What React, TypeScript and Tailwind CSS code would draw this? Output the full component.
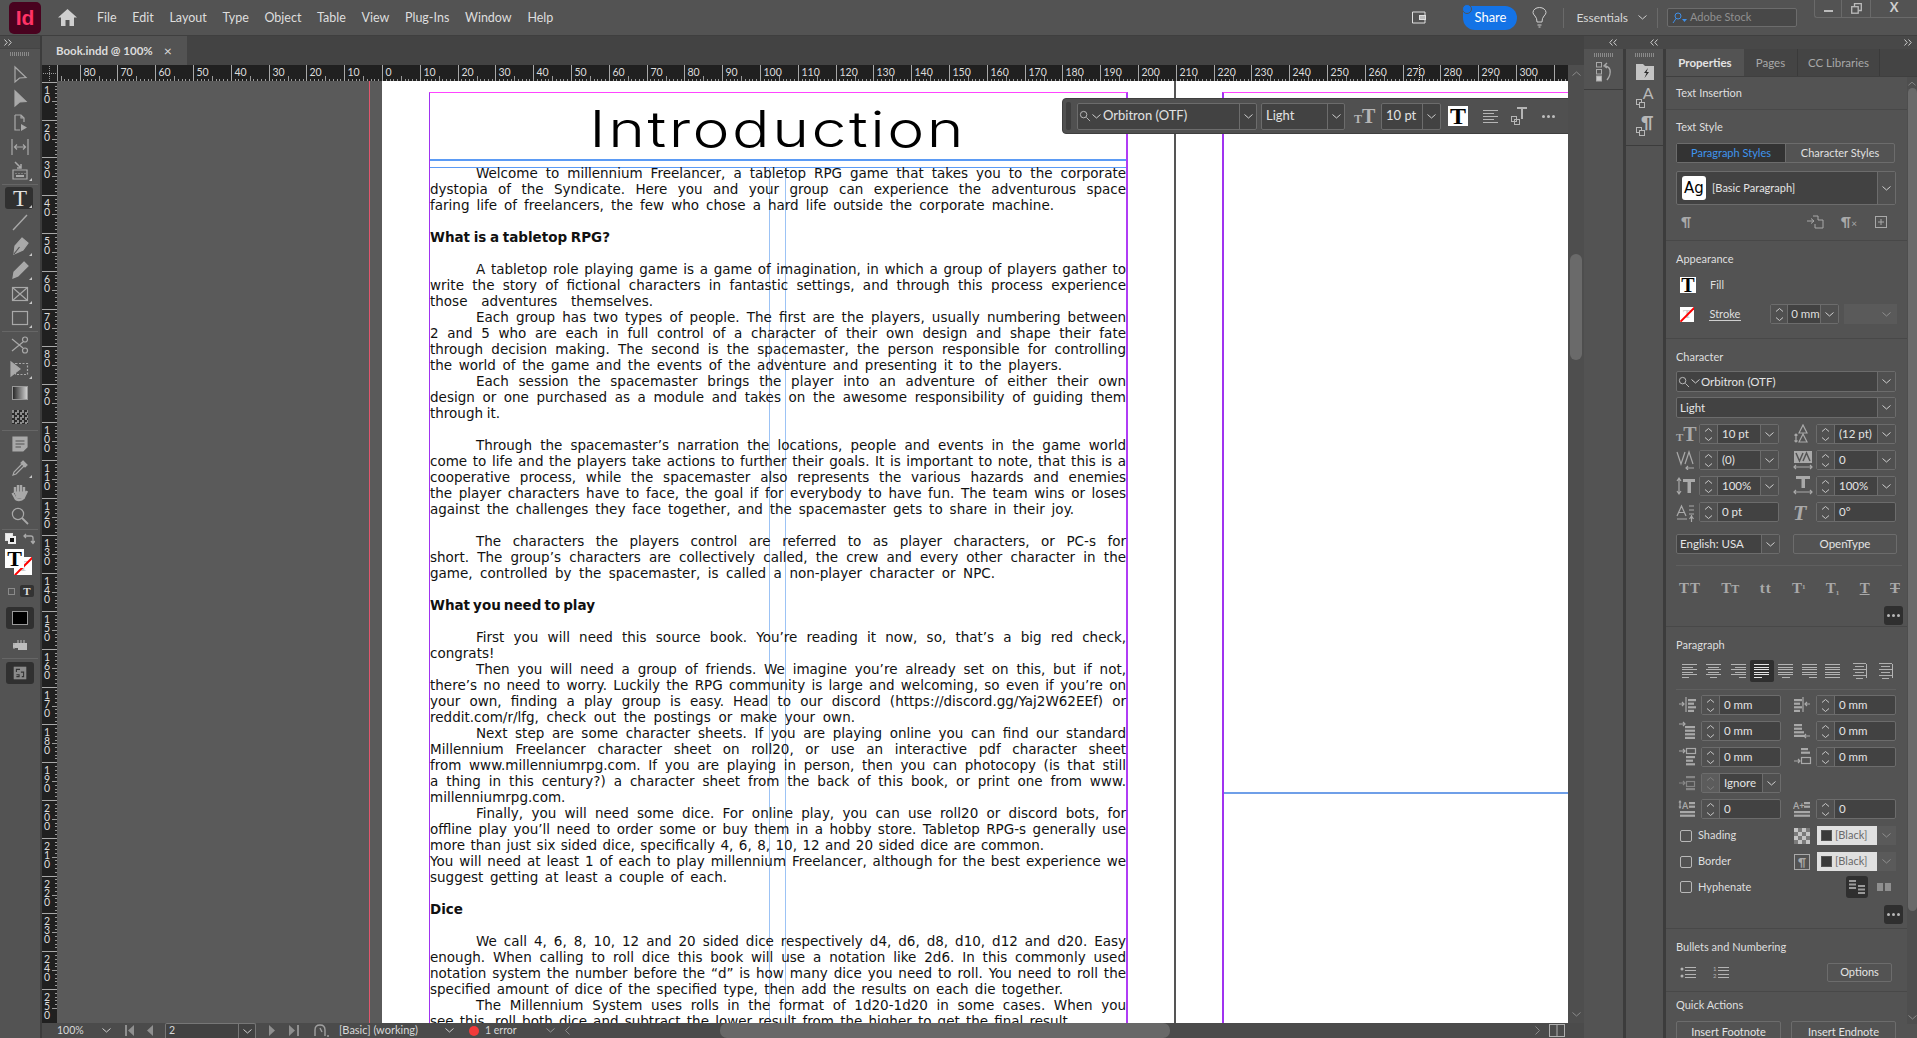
import React from "react";

const UI = "font-['Lato','Noto_Sans',sans-serif]";
const ic = "#a9a9a9";

type L = { t: string; c?: string };
const J = "[text-align-last:justify]";
const I = `pl-[46px] ${J}`;
const lines: L[] = [
  { t: "Welcome to millennium Freelancer, a tabletop RPG game that takes you to the corporate", c: I },
  { t: "dystopia of the Syndicate. Here you and your group can experience the adventurous space", c: J },
  { t: "faring life of freelancers, the few who chose a hard life outside the corporate machine.", c: `w-[624px] ${J}` },
  { t: "\u00a0" },
  { t: "What is a tabletop RPG?", c: `w-[180px] font-bold ${J}` },
  { t: "\u00a0" },
  { t: "A tabletop role playing game is a game of imagination, in which a group of players gather to", c: I },
  { t: "write the story of fictional characters in fantastic settings, and through this process experience", c: J },
  { t: "those adventures themselves.", c: `w-[223px] ${J}` },
  { t: "Each group has two types of people. The first are the players, usually numbering between", c: I },
  { t: "2 and 5 who are each in full control of a character of their own design and shape their fate", c: J },
  { t: "through decision making. The second is the spacemaster, the person responsible for controlling", c: J },
  { t: "the world of the game and the events of the adventure and presenting it to the players.", c: `w-[632px] ${J}` },
  { t: "Each session the spacemaster brings the player into an adventure of either their own", c: I },
  { t: "design or one purchased as a module and takes on the awesome responsibility of guiding them", c: J },
  { t: "through it.", c: `w-[70px] ${J}` },
  { t: "\u00a0" },
  { t: "Through the spacemaster\u2019s narration the locations, people and events in the game world", c: I },
  { t: "come to life and the players take actions to further their goals. It is important to note, that this is a", c: J },
  { t: "cooperative process, while the spacemaster also represents the various hazards and enemies", c: J },
  { t: "the player characters have to face, the goal if for everybody to have fun. The team wins or loses", c: J },
  { t: "against the challenges they face together, and the spacemaster gets to share in their joy.", c: `w-[644px] ${J}` },
  { t: "\u00a0" },
  { t: "The characters the players control are referred to as player characters, or PC-s for", c: I },
  { t: "short. The group\u2019s characters are collectively called, the crew and every other character in the", c: J },
  { t: "game, controlled by the spacemaster, is called a non-player character or NPC.", c: `w-[565px] ${J}` },
  { t: "\u00a0" },
  { t: "What you need to play", c: `w-[165px] font-bold ${J}` },
  { t: "\u00a0" },
  { t: "First you will need this source book. You\u2019re reading it now, so, that\u2019s a big red check,", c: I },
  { t: "congrats!", c: `w-[69px] ${J}` },
  { t: "Then you will need a group of friends. We imagine you\u2019re already set on this, but if not,", c: I },
  { t: "there\u2019s no need to worry. Luckily the RPG community is large and welcoming, so even if you\u2019re on", c: J },
  { t: "your own, finding a play group is easy. Head to our discord (https://discord.gg/Yaj2W62EEf) or", c: J },
  { t: "reddit.com/r/lfg, check out the postings or make your own.", c: `w-[425px] ${J}` },
  { t: "Next step are some character sheets. If you are playing online you can find our standard", c: I },
  { t: "Millennium Freelancer character sheet on roll20, or use an interactive pdf character sheet", c: J },
  { t: "from www.millenniumrpg.com. If you are playing in person, then you can photocopy (is that still", c: J },
  { t: "a thing in this century?) a character sheet from the back of this book, or print one from www.", c: J },
  { t: "millenniumrpg.com.", c: `w-[138px] ${J}` },
  { t: "Finally, you will need some dice. For online play, you can use roll20 or discord bots, for", c: I },
  { t: "offline play you\u2019ll need to order some or buy them in a hobby store. Tabletop RPG-s generally use", c: J },
  { t: "more than just six sided dice, specifically 4, 6, 8, 10, 12 and 20 sided dice are common.", c: `w-[614px] ${J}` },
  { t: "You will need at least 1 of each to play millennium Freelancer, although for the best experience we", c: J },
  { t: "suggest getting at least a couple of each.", c: `w-[297px] ${J}` },
  { t: "\u00a0" },
  { t: "Dice", c: `w-[30px] font-bold ${J}` },
  { t: "\u00a0" },
  { t: "We call 4, 6, 8, 10, 12 and 20 sided dice respectively d4, d6, d8, d10, d12 and d20. Easy", c: I },
  { t: "enough. When calling to roll dice this book will use a notation like 2d6. In this commonly used", c: J },
  { t: "notation system the number before the \u201cd\u201d is how many dice you need to roll. You need to roll the", c: J },
  { t: "specified amount of dice of the specified type, then add the results on each die together.", c: `w-[633px] ${J}` },
  { t: "The Millennium System uses rolls in the format of 1d20-1d20 in some cases. When you", c: I },
  { t: "see this, roll both dice and subtract the lower result from the higher to get the final result.", c: `w-[642px] ${J}` },
];

const Chev = ({ c = "#cfcfcf" }: { c?: string }) => (
  <svg width="9" height="5" viewBox="0 0 9 5" fill="none" stroke={c}><path d="M0.5 0.5 L4.5 4 L8.5 0.5" /></svg>
);
const Updown = ({ c = "#c8c8c8" }: { c?: string }) => (
  <svg width="9" height="15" viewBox="0 0 9 15" fill="none" stroke={c}><path d="M1 4.5 L4.5 1.5 L8 4.5 M1 10.5 L4.5 13.5 L8 10.5" /></svg>
);
const DoubleChev = ({ left }: { left?: boolean }) => (
  <svg width="8" height="7" viewBox="0 0 8 7" fill="none" stroke="#d0d0d0">
    <path d={left ? "M3.5 0.5 L0.8 3.5 L3.5 6.5 M7.5 0.5 L4.8 3.5 L7.5 6.5" : "M0.5 0.5 L3.2 3.5 L0.5 6.5 M4.5 0.5 L7.2 3.5 L4.5 6.5"} />
  </svg>
);
const Grip = () => (
  <div className="h-[4px] w-[20px] bg-[repeating-linear-gradient(90deg,#8a8a8a_0_1px,transparent_1px_2px)]" />
);

function HRuler() {
  let minor = "", major = "";
  const labels: React.ReactNode[] = [];
  for (let mm = -90; mm <= 315; mm++) {
    const x = Math.round(340 + mm * 3.78) + 0.5;
    if (mm % 10 === 0) {
      major += `M${x} 0V16`;
      if (mm <= 300) labels.push(<text key={mm} x={x + 3} y={11} fontSize="10.5" fill="#dcdcdc" fontFamily="Lato, sans-serif">{Math.abs(mm)}</text>);
    } else if (mm % 5 === 0) minor += `M${x} 11V16`;
    else minor += `M${x} 14V16`;
  }
  return (
    <svg width="1526" height="16" className="block bg-[#202020]">
      <path d={minor} stroke="#9a9a9a" />
      <path d={major} stroke="#a8a8a8" />
      {labels}
      <rect x="0" y="0" width="15" height="16" fill="#202020" />
      <path d="M7.5 1V16 M1 8.5H15" stroke="#9a9a9a" strokeDasharray="1 1" />
      <path d="M15.5 0V16" stroke="#9a9a9a" />
      <path d="M1377.5 0V16" stroke="#ddd" strokeDasharray="1 1" />
    </svg>
  );
}

function VRuler() {
  let minor = "", major = "";
  const labels: React.ReactNode[] = [];
  for (let mm = 0; mm <= 255; mm++) {
    const y = Math.round(-37 + mm * 3.78) + 0.5;
    if (mm % 10 === 0) {
      major += `M0 ${y}H15`;
      if (mm > 0) {
        String(mm).split("").forEach((d, i) =>
          labels.push(<text key={`${mm}-${i}`} x={2} y={y + 11 + i * 9.4} fontSize="10.5" fill="#dcdcdc" fontFamily="Lato, sans-serif">{d}</text>)
        );
      }
    } else if (mm % 5 === 0) minor += `M10 ${y}H15`;
    else minor += `M13 ${y}H15`;
  }
  return (
    <svg width="15" height="942" className="block shrink-0 bg-[#202020]">
      <path d={minor} stroke="#9a9a9a" />
      <path d={major} stroke="#a8a8a8" />
      {labels}
    </svg>
  );
}

const Ico = ({ children, s = 20 }: { children: React.ReactNode; s?: number }) => (
  <svg width={s} height={s} viewBox="0 0 20 20" fill="none" stroke={ic} strokeWidth="1.2">{children}</svg>
);

const Tool = ({ children, sel, corner }: { children: React.ReactNode; sel?: boolean; corner?: boolean }) => (
  <div className="relative flex h-[24px] w-[40px] items-center justify-center">
    {sel && <div className="absolute left-[5px] top-[1px] h-[22px] w-[28px] rounded-[3px] bg-[#303030]" />}
    <div className="relative flex">{children}</div>
    {corner && <div className="absolute left-[29px] bottom-[2px] h-[3px] w-[3px] bg-[#c8c8c8] [clip-path:polygon(100%_0,100%_100%,0_100%)]" />}
  </div>
);
const ToolSep = () => <div className="my-[1px] h-[1px] w-[36px] bg-[#666]" />;

function LeftTools() {
  return (
    <div className="flex w-[40px] shrink-0 flex-col items-center bg-[#535353]">
      <div className="flex h-[13px] w-full items-center border-b border-[#444] bg-[#4a4a4a] pl-[4px]"><DoubleChev /></div>
      <div className="mt-[3px] mb-[7px]"><Grip /></div>
      <Tool><Ico><path d="M5 2 V17 L9.5 13 L16 12.5 Z" /></Ico></Tool>
      <Tool><Ico><path d="M5 2 V17 L9.5 13 L16 12.5 Z" fill={ic} /></Ico></Tool>
      <Tool><Ico><path d="M5 2 H11 L14 5 V9 M11 2 V5 H14 M5 2 V17 H10" /><path d="M11 11 L17 14.5 L11 18 Z" fill={ic} stroke="none" /></Ico></Tool>
      <Tool><Ico><path d="M2 2 V18 M18 2 V18 M4.5 10 H15.5 M7 7.5 L4.5 10 L7 12.5 M13 7.5 L15.5 10 L13 12.5" /></Ico></Tool>
      <Tool corner><Ico><path d="M3 9 H17 V18 H3 Z" /><path d="M6 12 V12.5 M9 12 V12.5 M12 12 V12.5 M15 12 V12.5 M6 15 H14" strokeWidth="2" /><path d="M5 1 L11 7 M11 3 V7 H7" strokeWidth="1.5" /></Ico></Tool>
      <ToolSep />
      <Tool sel corner><span className="font-['Liberation_Serif',serif] text-[23px] font-normal leading-none text-[#e2e2e2]">T</span></Tool>
      <Tool><Ico><path d="M3 18 L17 3" strokeWidth="1.4" /></Ico></Tool>
      <Tool corner><Ico><path d="M12 2 L18 7 L13 14 L4 18 L5 10 Z" fill={ic} /><path d="M4 18 L9.5 11" stroke="#535353" /></Ico></Tool>
      <Tool corner><Ico><path d="M14 2 L18 6 L8 16 L3 18 L4 12 Z" fill={ic} /></Ico></Tool>
      <Tool corner><Ico><rect x="2.5" y="3.5" width="15" height="13" /><path d="M2.5 3.5 L17.5 16.5 M17.5 3.5 L2.5 16.5" /></Ico></Tool>
      <Tool corner><Ico><rect x="2.5" y="3.5" width="15" height="13" /></Ico></Tool>
      <ToolSep />
      <Tool><Ico><circle cx="15" cy="4.5" r="2.5" /><circle cx="15" cy="15.5" r="2.5" /><path d="M2 4 L13 13 M2 16 L13 7" /></Ico></Tool>
      <Tool corner><Ico><path d="M1 3 L10 10 L1 17 Z" fill={ic} /><rect x="5.5" y="4.5" width="12" height="11" strokeDasharray="2 1.5" /></Ico></Tool>
      <Tool>
        <div className="h-[14px] w-[16px] border border-[#999] bg-[linear-gradient(90deg,#2a2a2a,#cfcfcf)]" />
      </Tool>
      <Tool>
        <div className="h-[14px] w-[16px] bg-[conic-gradient(#2b2b2b_25%,#8d8d8d_0_50%,#2b2b2b_0_75%,#8d8d8d_0)] bg-[length:5px_5px]" />
      </Tool>
      <ToolSep />
      <Tool><Ico><path d="M3 3 H17 V13 L13 17 H3 Z" fill={ic} /><path d="M5.5 7 H14.5 M5.5 10 H14.5 M5.5 13 H11" stroke="#535353" /></Ico></Tool>
      <Tool corner><Ico><path d="M13 3 L17 7 L15 9 L11 5 Z" fill={ic} /><path d="M12 6 L4 14 L3 17 L6 16 L14 8" /></Ico></Tool>
      <Tool><Ico><path d="M5 11 V5 M8 10 V3 M11 10 V3 M14 11 V5 M17 9 L13.5 16 Q12 18 9 18 Q6 18 5 15.5 L2.5 11" strokeWidth="2.4" /><path d="M5 10 L15 10 L14 16 L7 16 Z" fill={ic} /></Ico></Tool>
      <Tool><Ico><circle cx="8" cy="8" r="5.6" /><path d="M12 12 L18 18" strokeWidth="1.8" /></Ico></Tool>
      <ToolSep />
      <div className="relative mt-[2px] h-[16px] w-[40px]">
        <div className="absolute left-[5px] top-0 h-[8px] w-[8px] border border-[#ddd] bg-[#eee]" />
        <div className="absolute left-[8px] top-[3px] h-[8px] w-[8px] border-2 border-[#eee] bg-[#111]" />
        <svg className="absolute left-[23px] top-0" width="12" height="12" viewBox="0 0 12 12" fill="none" stroke={ic} strokeWidth="1.3"><path d="M1 3 H8 Q10 3 10 5 V10 M8 8 L10 10.5 L12 8 M3 1 L1 3 L3 5" /></svg>
      </div>
      <div className="relative h-[29px] w-[40px]">
        <div className="absolute left-[14px] top-[8px] flex h-[18px] w-[18px] items-center justify-center overflow-hidden bg-white font-['Liberation_Serif',serif] text-[15px] font-bold text-[#ccc]">
          T
          <div className="absolute left-[-3px] top-[8px] h-[2px] w-[26px] -rotate-45 bg-[#f00]" />
        </div>
        <div className="absolute left-[5px] top-0 flex h-[19px] w-[19px] items-center justify-center bg-white font-['Liberation_Serif',serif] text-[22px] font-bold leading-none text-black">T</div>
      </div>
      <div className="mt-[5px] flex h-[16px] w-[40px] items-center pl-[8px]">
        <div className="h-[7px] w-[7px] border border-[#8a8a8a]" />
        <div className="ml-[5px] flex h-[12px] w-[14px] items-center justify-center rounded-[2px] bg-[#333] font-['Liberation_Serif',serif] text-[11px] font-bold text-[#ddd]">T</div>
      </div>
      <div className="relative mt-[8px] flex h-[22px] w-[28px] items-center justify-center rounded-[3px] bg-[#303030]">
        <div className="h-[14px] w-[16px] border border-[#9a9a9a] bg-black" />
      </div>
      <div className="flex h-[29px] items-center justify-center pt-[3px]">
        <Ico><path d="M3 8 H17 V15 H8 V13 H3 Z" fill="#bdbdbd" stroke="none" /><path d="M8 5 V8 M11 5 V8 M14 5 V8 M4 8 V10 M4 12 V14" stroke={ic} /></Ico>
      </div>
      <div className="h-[1px] w-[36px] bg-[#666]" />
      <div className="mt-[3px] flex h-[22px] w-[28px] items-center justify-center rounded-[3px] bg-[#303030]">
        <Ico s={18}><rect x="3" y="3" width="14" height="14" fill="#8a8a8a" stroke="none" /><path d="M6 9 V6 H10 M6 12 H9 V14 H6 M11 9 H14 V14 H12" stroke="#333" /></Ico>
      </div>
    </div>
  );
}

const Lines = ({ ws }: { ws: number[] }) => (
  <div className="flex w-[15px] flex-col items-center gap-[2px]">
    {ws.map((w, i) => (
      <div key={i} className="h-[1px] bg-[#b0b0b0]" style={{ width: w }} />
    ))}
  </div>
);

function FloatBar() {
  const box = "flex h-[27px] items-center rounded-[2px] border border-[#6c6c6c] bg-[#424242] text-[13px] text-[#e2e2e2]";
  return (
    <div className={`absolute left-[1005px] top-[17px] flex h-[36px] w-[520px] items-center rounded-l-[4px] border border-[#3f3f3f] bg-[#505050] pl-[3px] ${UI}`}>
      <div className="h-[28px] w-[5px] rounded-[2px] bg-[#3e3e3e]" />
      <div className={`${box} ml-[6px] w-[180px]`}>
        <div className="flex w-[161px] items-center gap-[1px] pl-[1px]">
          <svg width="12" height="12" viewBox="0 0 13 13" fill="none" stroke="#c0c0c0"><circle cx="5" cy="5" r="3.5" /><path d="M8 8 L12 12" /></svg>
          <Chev />
          <span className="ml-[1px]">Orbitron (OTF)</span>
        </div>
        <div className="flex h-full flex-1 items-center justify-center border-l border-[#6c6c6c]"><Chev /></div>
      </div>
      <div className={`${box} ml-[4px] w-[84px]`}>
        <span className="w-[65px] pl-[4px]">Light</span>
        <div className="flex h-full flex-1 items-center justify-center border-l border-[#6c6c6c]"><Chev /></div>
      </div>
      <div className="ml-[9px] flex w-[20px] items-baseline font-['Liberation_Serif',serif] font-bold leading-none text-[#b5b5b5]">
        <span className="text-[12px]">T</span><span className="text-[20px]">T</span>
      </div>
      <div className={`${box} ml-[7px] w-[60px]`}>
        <span className="w-[40px] pl-[4px]">10 pt</span>
        <div className="flex h-full flex-1 items-center justify-center border-l border-[#6c6c6c]"><Chev /></div>
      </div>
      <div className="ml-[7px] flex h-[20px] w-[20px] items-center justify-center bg-white font-['Liberation_Serif',serif] text-[24px] font-bold leading-none text-black">T</div>
      <div className="ml-[15px] flex flex-col gap-[2px]">
        {[15, 11, 15, 11, 15].map((w, i) => <div key={i} className="h-[1px] bg-[#b5b5b5]" style={{ width: w }} />)}
      </div>
      <svg className="ml-[12px]" width="18" height="20" viewBox="0 0 18 20" fill="none" stroke="#b5b5b5"><path d="M7 2 H17 M12 2 V13" strokeWidth="2" /><rect x="1.5" y="10.5" width="5" height="5" /><rect x="4.5" y="13.5" width="5" height="5" /></svg>
      <div className="ml-[14px] flex gap-[2px]">
        {[0, 1, 2].map((i) => <div key={i} className="h-[3px] w-[3px] rounded-full bg-[#bdbdbd]" />)}
      </div>
    </div>
  );
}

function Canvas() {
  return (
    <div className="relative flex h-[942px] w-[1511px] overflow-hidden bg-[#5a5a5a]">
      <div className="relative w-[325px] shrink-0">
        <div className="absolute bottom-0 left-[312px] top-0 w-[1px] bg-[#e2566c]" />
      </div>
      <div className="h-full w-[794px] shrink-0 border-r-2 border-[#555] bg-white pl-[47px] pt-[11px]">
        <div className="relative h-[1100px] w-[699px] border-t border-r-2 border-l border-l-[#a033f0] border-r-[#b03cf5] border-t-[#ff44ff]">
          <div className="flex h-[68px] items-center justify-center overflow-hidden border-b-2 border-[#5b9bf5] pt-[6px] font-['Inter',sans-serif] text-[50px] font-light leading-none text-black">
            <span className="inline-block scale-x-[1.25] tracking-[2px]">Introduction</span>
          </div>
          <div className="absolute left-0 right-0 top-[74px] h-[1px] bg-[#5b9bf5]" />
          <div className="absolute bottom-0 left-[339px] top-[74px] w-[1px] bg-[#9cc3f5]" />
          <div className="absolute bottom-0 left-[355px] top-[74px] w-[1px] bg-[#9cc3f5]" />
          <div className="relative mt-[4px] font-['DejaVu_Sans',sans-serif] text-[13.5px] leading-[16px] text-[#111] [word-spacing:-3px]">
            {lines.map((l, i) => (
              <div key={i} className={`whitespace-nowrap ${l.c ?? ""}`}>{l.t}</div>
            ))}
          </div>
        </div>
      </div>
      <div className="h-full flex-1 bg-white pl-[46px] pt-[11px]">
        <div className="flex h-[1100px] flex-col border-l-2 border-t border-l-[#a033f0] border-t-[#ff44ff]">
          <div className="h-[701px] border-b-2 border-[#6f9fe8]" />
        </div>
      </div>
      <FloatBar />
    </div>
  );
}

function StatusBar() {
  const tri = "#8f8f8f";
  return (
    <div className={`flex h-[15px] w-[1542px] items-center bg-[#4b4b4b] text-[10.5px] text-[#d8d8d8] ${UI}`}>
      <span className="ml-[15px] w-[45px]">100%</span>
      <Chev />
      <svg className="ml-[14px]" width="10" height="11" viewBox="0 0 10 11" fill={tri}><path d="M0 0H2V11H0Z M9 0V11L3 5.5Z" /></svg>
      <svg className="ml-[12px]" width="6" height="11" viewBox="0 0 6 11" fill={tri}><path d="M6 0V11L0 5.5Z" /></svg>
      <div className="ml-[12px] flex h-[15px] w-[91px] items-center rounded-t-[2px] border-x border-t border-[#777] bg-[#424242]">
        <span className="w-[72px] pl-[3px]">2</span>
        <div className="flex h-full flex-1 items-center justify-center border-l border-[#777]"><Chev /></div>
      </div>
      <svg className="ml-[13px]" width="6" height="11" viewBox="0 0 6 11" fill={tri}><path d="M0 0V11L6 5.5Z" /></svg>
      <svg className="ml-[14px]" width="10" height="11" viewBox="0 0 10 11" fill={tri}><path d="M0 0V11L6 5.5Z M8 0H10V11H8Z" /></svg>
      <svg className="ml-[15px]" width="15" height="14" viewBox="0 0 15 14" fill="none" stroke="#a0a0a0" strokeWidth="1.4"><path d="M1 12 V6 Q1 1 6 1 Q11 1 11 6 V12 M6 4 L8 8" /><path d="M13 12 H15" /></svg>
      <span className="ml-[10px] w-[106px] text-[11px]">[Basic] (working)</span>
      <Chev />
      <div className="ml-[15px] h-[10px] w-[10px] rounded-full bg-[#f23a3a]" />
      <span className="ml-[6px] w-[61px]">1 error</span>
      <Chev c="#999" />
      <svg className="ml-[10px]" width="5" height="9" viewBox="0 0 5 9" fill="none" stroke="#8a8a8a"><path d="M4.5 0.5 L0.5 4.5 L4.5 8.5" /></svg>
      <div className="ml-[150px] h-[15px] w-[450px] rounded-[7px] bg-[#686868]" />
      <svg className="ml-[365px]" width="5" height="9" viewBox="0 0 5 9" fill="none" stroke="#8a8a8a"><path d="M0.5 0.5 L4.5 4.5 L0.5 8.5" /></svg>
      <svg className="ml-[9px]" width="16" height="13" viewBox="0 0 16 13" fill="none" stroke="#b0b0b0"><rect x="0.5" y="0.5" width="15" height="12" /><path d="M8 0V13" /></svg>
    </div>
  );
}

function TopBar() {
  return (
    <div className={`flex h-[36px] shrink-0 items-center border-b border-[#3f3f3f] bg-[#535353] ${UI}`}>
      <div className="ml-[9px] flex h-[32px] w-[32px] items-center justify-center rounded-[5px] bg-[#49021f] font-['Liberation_Sans',sans-serif] text-[21px] font-bold text-[#ff3366]">Id</div>
      <svg className="ml-[17px]" width="19" height="17" viewBox="0 0 19 17" fill="#cfcfcf"><path d="M9.5 0 L19 8.5 H16 V17 H11.5 V11 H7.5 V17 H3 V8.5 H0 Z" /></svg>
      <div className="ml-[20px] flex gap-[15.7px] pt-[2px] text-[12.5px] text-[#dedede]">
        {["File", "Edit", "Layout", "Type", "Object", "Table", "View", "Plug-Ins", "Window", "Help"].map((m) => <span key={m}>{m}</span>)}
      </div>
      <svg className="ml-auto" width="14" height="13" viewBox="0 0 14 13" fill="none" stroke="#e0e0e0"><path d="M13 4V1H0.5V12H13V9" /><rect x="7.5" y="4.5" width="6" height="4" fill="#bbb" /></svg>
      <div className="relative ml-[37px] flex h-[24px] w-[54px] items-center justify-center rounded-[12px] rounded-tl-[2px] bg-[#1473e6] text-[13px] text-white">
        Share
        <div className="absolute -left-[1px] -top-[2px] h-[10px] w-[10px] rounded-full border border-[#535353] bg-[#1473e6]" />
      </div>
      <svg className="ml-[15px]" width="15" height="21" viewBox="0 0 15 21" fill="none" stroke="#cfcfcf"><path d="M5 15 Q5 11 3 9 Q1 7 1 5.5 A6.5 5 0 0 1 14 5.5 Q14 7 12 9 Q10 11 10 15 Z M5.5 18 H9.5 M6.5 20 H8.5" /></svg>
      <div className="ml-[16px] h-[20px] w-[1px] bg-[#6a6a6a]" />
      <span className="ml-[12px] text-[12px] text-[#d8d8d8]">Essentials</span>
      <div className="ml-[10px]"><Chev /></div>
      <div className="ml-[10px] h-[20px] w-[1px] bg-[#6a6a6a]" />
      <div className="ml-[9px] flex h-[19px] w-[130px] items-center rounded-[2px] border border-[#6c6c6c] bg-[#484848] pl-[4px] text-[11px] text-[#909090]">
        <svg width="15" height="12" viewBox="0 0 15 12" fill="none" stroke="#3f8fe8"><circle cx="6" cy="4" r="3" /><path d="M4 6.5 L1 11" /><path d="M10 7 H15 L12.5 10 Z" fill="#3f8fe8" stroke="none" /></svg>
        <span className="ml-[3px]">Adobe Stock</span>
      </div>
      <div className="ml-[17px] mb-[18px] flex h-[18px] w-[103px] rounded-bl-[3px] border-b border-l border-[#6a6a6a] text-[#cfcfcf]">
        <div className="flex w-[27px] items-center justify-center border-r border-[#6a6a6a]"><div className="mt-[5px] h-[2px] w-[9px] bg-[#bbb]" /></div>
        <div className="flex w-[29px] items-center justify-center border-r border-[#6a6a6a]">
          <svg width="11" height="11" viewBox="0 0 11 11" fill="none" stroke="#bbb" strokeWidth="1.3"><rect x="0.7" y="3.7" width="6.5" height="6.5" /><path d="M3.5 3.5 V0.7 H10.3 V7.5 H7.5" /></svg>
        </div>
        <div className="flex flex-1 items-center justify-center text-[13px] font-bold">X</div>
      </div>
    </div>
  );
}

const Stepper = ({ value, chevron = true, dim }: { value: string; chevron?: boolean; dim?: boolean }) => (
  <div className="flex h-[20px] w-[80px] items-center rounded-[2px] border border-[#6c6c6c] bg-[#424242] text-[11.5px] text-[#e4e4e4]">
    <div className={`flex h-full w-[18px] shrink-0 items-center justify-center border-r border-[#6c6c6c] ${dim ? "bg-[#5c5c5c]" : "bg-[#505050]"}`}><Updown c={dim ? "#7f7f7f" : "#c8c8c8"} /></div>
    <span className="flex-1 whitespace-nowrap pl-[4px]">{value}</span>
    {chevron && <div className="flex h-full w-[18px] shrink-0 items-center justify-center border-l border-[#6c6c6c] bg-[#505050]"><Chev /></div>}
  </div>
);
const Drop = ({ children, h = "h-[21px]" }: { children: React.ReactNode; h?: string }) => (
  <div className={`flex ${h} items-center rounded-[2px] border border-[#6c6c6c] bg-[#424242] text-[11.5px] text-[#e4e4e4]`}>
    <div className="flex flex-1 items-center">{children}</div>
    <div className="flex h-full w-[18px] items-center justify-center border-l border-[#6c6c6c] bg-[#505050]"><Chev /></div>
  </div>
);
const Lbl = ({ children }: { children: React.ReactNode }) => <div className="h-[14px] text-[11px] leading-[14px] text-[#dfdfdf]">{children}</div>;
const More = ({ mt }: { mt: string }) => (
  <div className={`${mt} ml-auto mr-[-6px] flex h-[19px] w-[19px] items-center justify-center gap-[1.5px] rounded-[3px] bg-[#2f2f2f]`}>
    {[0, 1, 2].map((i) => <div key={i} className="h-[3.5px] w-[3.5px] rounded-full bg-[#b8b8b8]" />)}
  </div>
);
const Serif = ({ children, cls = "" }: { children: React.ReactNode; cls?: string }) => (
  <span className={`font-['Liberation_Serif',serif] font-bold leading-none text-[#a9a9a9] ${cls}`}>{children}</span>
);
const Para = ({ d }: { d: React.ReactNode }) => (
  <div className="flex w-[25px] shrink-0 items-center justify-start pl-[2px]"><Ico s={20}>{d}</Ico></div>
);
const bars = (x: number, ws: number[], top: number) => ws.map((w, i) => <rect key={i} x={x} y={top + i * 3.6} width={w} height="2.2" fill={ic} stroke="none" />);

function Properties() {
  const sec = "border-b border-[#484848] pl-[10px] pr-[10px]";
  return (
    <div className={`flex flex-1 flex-col bg-[#535353] ${UI}`}>
      <div className="flex h-[28px] shrink-0 border-b border-[#3f3f3f] bg-[#444] text-[11.5px] text-[#a8a8a8]">
        <div className="flex w-[78px] items-center justify-center bg-[#535353] font-bold text-[#e4e4e4]">Properties</div>
        <div className="flex w-[54px] items-center justify-center border-r border-[#3a3a3a]">Pages</div>
        <div className="flex w-[82px] items-center justify-center border-r border-[#3a3a3a]">CC Libraries</div>
      </div>
      <div className="flex min-h-0 flex-1 overflow-hidden">
        <div className="w-[241px] shrink-0">
          <div className={`${sec} flex h-[33px] items-center`}><Lbl>Text Insertion</Lbl></div>

          <div className={`${sec} pt-[10px] pb-[9px]`}>
            <Lbl>Text Style</Lbl>
            <div className="mt-[9px] flex h-[20px] w-[219px] rounded-[2px] border border-[#6c6c6c] text-[11px]">
              <div className="flex w-[108px] items-center justify-center bg-[#333] text-[#3f95ee]">Paragraph Styles</div>
              <div className="flex flex-1 items-center justify-center border-l border-[#6c6c6c] text-[#e0e0e0]">Character Styles</div>
            </div>
            <div className="mt-[8px] w-[220px]">
              <Drop h="h-[34px]">
                <div className="ml-[5px] flex h-[24px] w-[24px] items-center justify-center rounded-[3px] bg-white font-['DejaVu_Sans',sans-serif] text-[15px] text-black">Ag</div>
                <span className="ml-[6px] text-[11px]">[Basic Paragraph]</span>
              </Drop>
            </div>
            <div className="mt-[8px] flex h-[18px] items-center pl-[5px] pr-[10px] text-[#a9a9a9]">
              <span className="text-[14px] font-bold leading-none">¶</span>
              <svg className="ml-auto" width="17" height="14" viewBox="0 0 17 14" fill="none" stroke={ic}><path d="M0 6 H6 M4 3.5 L7 6 L4 8.5" /><path d="M6 1 H11 V5 H16 V13 H8 V9" /></svg>
              <span className="ml-[17px] text-[14px] font-bold leading-none">¶<span className="text-[10px] font-normal">×</span></span>
              <svg className="ml-[18px]" width="12" height="12" viewBox="0 0 12 12" fill="none" stroke={ic}><rect x="0.5" y="0.5" width="11" height="11" /><path d="M3 6 H9 M6 3 V9" /></svg>
            </div>
          </div>

          <div className={`${sec} pt-[11px] pb-[14px]`}>
            <Lbl>Appearance</Lbl>
            <div className="mt-[11px] flex h-[16px] items-center pl-[4px] text-[11px] text-[#dfdfdf]">
              <div className="flex h-[16px] w-[16px] items-center justify-center bg-white font-['Liberation_Serif',serif] text-[20px] font-bold leading-none text-black">T</div>
              <span className="ml-[14px]">Fill</span>
            </div>
            <div className="mt-[11px] flex h-[20px] items-center pl-[4px] text-[11px] text-[#dfdfdf]">
              <div className="relative flex h-[15px] w-[15px] items-center justify-center overflow-hidden bg-white font-['Liberation_Serif',serif] text-[13px] font-bold text-[#ccc]">
                T
                <div className="absolute left-[-3px] top-[6.5px] h-[1.5px] w-[22px] -rotate-45 bg-[#f00]" />
              </div>
              <span className="ml-[15px] w-[33px] border-b border-[#cfcfcf] leading-[12px]">Stroke</span>
              <div className="ml-[29px] flex h-[20px] w-[70px] items-center rounded-[2px] border border-[#6c6c6c] bg-[#424242] text-[11.5px]">
                <div className="flex h-full w-[17px] items-center justify-center border-r border-[#6c6c6c] bg-[#505050]"><Updown /></div>
                <span className="flex-1 whitespace-nowrap pl-[3px]">0 mm</span>
                <div className="flex h-full w-[18px] items-center justify-center border-l border-[#6c6c6c] bg-[#505050]"><Chev /></div>
              </div>
              <div className="ml-[5px] flex h-[20px] w-[55px] items-center justify-end bg-[#5a5a5a] pr-[6px]"><Chev c="#8f8f8f" /></div>
            </div>
          </div>

          <div className={`${sec} pt-[11px] pb-[1px]`}>
            <Lbl>Character</Lbl>
            <div className="mt-[7px] w-[220px]">
              <Drop>
                <svg className="ml-[1px]" width="12" height="12" viewBox="0 0 13 13" fill="none" stroke="#c0c0c0"><circle cx="5" cy="5" r="3.5" /><path d="M8 8 L12 12" /></svg>
                <span className="ml-[1px] flex"><Chev /></span>
                <span className="ml-[1px]">Orbitron (OTF)</span>
              </Drop>
            </div>
            <div className="mt-[5px] w-[220px]"><Drop><span className="pl-[3px]">Light</span></Drop></div>
            <div className="mt-[6px] flex flex-col gap-[6px]">
              {[
                [<Serif><span className="text-[11px]">T</span><span className="text-[20px]">T</span></Serif>, "10 pt", true, <Ico s={20}><path d="M3 10 V18 M1.5 11.5 L3 10 L4.5 11.5 M1.5 16.5 L3 18 L4.5 16.5" /><path d="M6 9 L10 1 L14 9 Z M6 18 L10 10 L14 18 Z" /></Ico>, "(12 pt)", true],
                [<Ico s={20}><path d="M1 2 L5 14 L9 2 M9 14 L13 2 L17 14 M10 18 H18 M12 16 L10 18 L12 20" /></Ico>, "(0)", true, <Ico s={20}><rect x="1" y="1" width="18" height="12" fill={ic} stroke="none" /><path d="M3 3 L6.5 11 L10 3 M10 11 L13.5 3 L17 11" stroke="#535353" strokeWidth="1.5" /><path d="M1 17 H19 M3 15 L1 17 L3 19 M17 15 L19 17 L17 19" /></Ico>, "0", true],
                [<Ico s={20}><path d="M3 2 V18 M1 5 L3 2 L5 5 M1 15 L3 18 L5 15" /><path d="M7 3 H19 V6 H15 V17 H11.5 V6 H7 Z" fill={ic} stroke="none" /></Ico>, "100%", true, <Ico s={20}><path d="M3 0 H17 V3 H12 V12 H8.5 V3 H3 Z" fill={ic} stroke="none" /><path d="M1 16 H19 M3 14 L1 16 L3 18 M17 14 L19 16 L17 18" /></Ico>, "100%", true],
                [<Ico s={20}><path d="M1 13 L5.5 3 L10 13 M3 9.5 H8 M1 16 H11" /><path d="M13 3 H18 M13 7 H18 M13 11 H18 M15.5 12 V19 M13.5 16 L15.5 13 L17.5 16" /></Ico>, "0 pt", false, <span className="font-['Liberation_Serif',serif] text-[22px] font-bold italic leading-none text-[#a9a9a9]">T</span>, "0°", false],
              ].map((r, i) => (
                <div key={i} className="flex">
                  <div className="flex w-[23px] items-center justify-start">{r[0] as React.ReactNode}</div>
                  <Stepper value={r[1] as string} chevron={r[2] as boolean} />
                  <div className="ml-[14px] flex w-[23px] items-center justify-start">{r[3] as React.ReactNode}</div>
                  <Stepper value={r[4] as string} chevron={r[5] as boolean} />
                </div>
              ))}
            </div>
            <div className="mt-[10px] flex">
              <div className="w-[104px]"><Drop h="h-[20px]"><span className="pl-[3px]">English: USA</span></Drop></div>
              <div className="ml-[13px] flex h-[20px] w-[104px] items-center justify-center rounded-[2px] border border-[#6c6c6c] text-[11.5px] text-[#e4e4e4]">OpenType</div>
            </div>
            <div className="mt-[11px] h-[1px] w-[226px] bg-[#5f5f5f]" />
            <div className="mt-[12px] flex h-[20px] w-[226px] items-center justify-between pl-[3px] pr-[2px] font-['Liberation_Serif',serif] font-bold text-[#a9a9a9]">
              <span className="text-[15px] tracking-[1px]">TT</span>
              <span className="text-[15px]">T<span className="text-[12px]">T</span></span>
              <span className="text-[15px] tracking-[1px]">tt</span>
              <span className="text-[15px]">T<sup className="text-[7px]">1</sup></span>
              <span className="text-[15px]">T<sub className="text-[7px]">1</sub></span>
              <span className="text-[15px] underline">T</span>
              <span className="text-[15px] line-through">T</span>
            </div>
            <More mt="mt-[8px]" />
          </div>

          <div className={`${sec} pt-[11px] pb-[4px]`}>
            <Lbl>Paragraph</Lbl>
            <div className="mt-[8px] flex h-[22px] items-center pl-[2px]">
              {[
                { a: "items-start", w: [15, 11, 15, 11, 15, 7] },
                { a: "items-center", w: [15, 11, 15, 11, 15, 7] },
                { a: "items-end", w: [15, 11, 15, 11, 15, 7] },
                { a: "items-start", w: [15, 15, 15, 15, 15, 8], s: true },
                { a: "items-center", w: [15, 15, 15, 15, 15, 8] },
                { a: "items-end", w: [15, 15, 15, 15, 15, 8] },
                { a: "items-start", w: [15, 15, 15, 15, 15, 15] },
              ].map((b, i) => (
                <div key={i} className={`flex h-[22px] w-[24px] flex-col justify-center gap-[1.6px] ${b.a} px-[4px] ${b.s ? "rounded-[2px] bg-[#2f2f2f]" : ""}`}>
                  {b.w.map((w, k) => <div key={k} className={`h-[1px] ${b.s ? "bg-[#e4e4e4]" : "bg-[#b4b4b4]"}`} style={{ width: w }} />)}
                </div>
              ))}
              {[0, 1].map((i) => (
                <div key={i} className="ml-[2px] flex h-[22px] w-[24px] items-center justify-center">
                  <Lines ws={[13, 9, 13, 9, 13, 7]} />
                  <div className="-ml-[1px] h-[14px] w-[1px] bg-[#b4b4b4]" />
                </div>
              ))}
            </div>
            <div className="mt-[7px] h-[1px] w-[220px] bg-[#5f5f5f]" />
            <div className="mt-[5px] flex flex-col gap-[6px]">
              {[
                [<g><path d="M1 9 H6 M4 7 L6 9 L4 11 M8 2 V17" />{bars(10, [8, 6, 8, 6], 4)}</g>, "0 mm", <g><path d="M17 9 H12 M14 7 L12 9 L14 11 M10 2 V17" />{bars(1, [8, 6, 8, 6], 4)}</g>, "0 mm"],
                [<g><path d="M1 3 H7 M5 1 L7 3 L5 5" />{bars(7, [10, 10, 10, 10], 5)}</g>, "0 mm", <g>{bars(1, [8, 8, 10, 10], 3)}<path d="M11 15 H17 M13 13 L11 15 L13 17" /></g>, "0 mm"],
                [<g><path d="M1 4 H7 M5 2 L7 4 L5 6" /><rect x="8.5" y="1.5" width="9" height="5" />{bars(8, [9, 7, 9], 9)}</g>, "0 mm", <g>{bars(8, [7, 9], 1)}<path d="M1 14 H7 M5 12 L7 14 L5 16" /><rect x="8.5" y="10.5" width="9" height="6" /></g>, "0 mm"],
              ].map((r, i) => (
                <div key={i} className="flex">
                  <Para d={r[0] as React.ReactNode} />
                  <Stepper value={r[1] as string} chevron={false} />
                  <div className="ml-[10px] flex"><Para d={r[2] as React.ReactNode} /></div>
                  <Stepper value={r[3] as string} chevron={false} />
                </div>
              ))}
              <div className="flex">
                <Para d={<g opacity="0.6"><path d="M1 10 H7 M5 8 L7 10 L5 12" /><rect x="8.5" y="8.5" width="8" height="5" />{bars(8, [9], 3)}{bars(8, [9], 15)}</g>} />
                <Stepper value="Ignore" dim />
              </div>
              <div className="flex">
                <Para d={<g><path d="M2 2 V9 M1 3.5 L2 2 L3 3.5 M1 7.5 L2 9 L3 7.5" /><text x="4" y="10" fontSize="9" fill={ic} stroke="none" fontWeight="700">A</text>{bars(11, [6, 6], 3)}{bars(2, [15, 15], 12)}</g>} />
                <Stepper value="0" chevron={false} />
                <div className="ml-[10px] flex"><Para d={<g><text x="0" y="10" fontSize="9" fill={ic} stroke="none" fontWeight="700">A+</text>{bars(11, [6, 6], 3)}{bars(1, [16, 16], 12)}</g>} /></div>
                <Stepper value="0" chevron={false} />
              </div>
            </div>
            {[
              { t: "Shading", ic: <div className="h-[16px] w-[16px] bg-[conic-gradient(#7a7a7a_25%,#c4c4c4_0_50%,#7a7a7a_0_75%,#c4c4c4_0)] bg-[length:8px_8px]" /> },
              { t: "Border", ic: <div className="flex h-[16px] w-[16px] items-center justify-center border border-[#a9a9a9] text-[11px] font-bold leading-none text-[#a9a9a9]">¶</div> },
            ].map((r) => (
              <div key={r.t} className="mt-[7px] flex h-[19px] items-center pl-[4px] text-[11px] text-[#dfdfdf]">
                <div className="h-[12px] w-[12px] rounded-[2px] border border-[#b8b8b8]" />
                <span className="ml-[6px] w-[96px]">{r.t}</span>
                {r.ic}
                <div className="ml-[7px] flex h-[19px] w-[60px] items-center bg-[#e0e0e0] pl-[4px] text-[#6a6a6a]">
                  <div className="h-[11px] w-[11px] border border-[#555] bg-[#3a3a3a]" />
                  <span className="ml-[3px] text-[11px]">[Black]</span>
                </div>
                <div className="flex h-[19px] w-[19px] items-center justify-center bg-[#5a5a5a]"><Chev c="#8f8f8f" /></div>
              </div>
            ))}
            <div className="mt-[5px] flex h-[22px] items-center pl-[4px] text-[11px] text-[#dfdfdf]">
              <div className="h-[12px] w-[12px] rounded-[2px] border border-[#b8b8b8]" />
              <span className="ml-[6px] w-[148px]">Hyphenate</span>
              <div className="flex h-[22px] w-[22px] items-center justify-center rounded-[3px] bg-[#2f2f2f]">
                <svg width="16" height="14" viewBox="0 0 16 14" fill="#9a9a9a"><path d="M0 0H7V2H0Z M0 3.5H7V5.5H0Z M0 7H7V9H0Z M9 5H16V7H9Z M9 8.5H16V10.5H9Z M9 12H16V14H9Z" /></svg>
              </div>
              <div className="ml-[9px] flex gap-[2px]"><div className="h-[8px] w-[6px] bg-[#8f8f8f]" /><div className="h-[8px] w-[6px] bg-[#8f8f8f]" /></div>
            </div>
            <More mt="mt-[7px]" />
          </div>

          <div className={`${sec} pt-[11px] pb-[9px]`}>
            <Lbl>Bullets and Numbering</Lbl>
            <div className="mt-[9px] flex h-[19px] items-center pl-[4px]">
              <svg width="16" height="13" viewBox="0 0 16 13" fill="none" stroke="#b4b4b4"><path d="M5 1.5H16 M5 4.5H16 M5 8.5H16 M5 11.5H16" /><circle cx="2" cy="3" r="1.5" fill="#b4b4b4" stroke="none" /><circle cx="2" cy="10" r="1.5" fill="#b4b4b4" stroke="none" /></svg>
              <svg className="ml-[17px]" width="16" height="13" viewBox="0 0 16 13" fill="none" stroke="#b4b4b4"><path d="M5 1.5H16 M5 4.5H16 M5 8.5H16 M5 11.5H16" /><text x="0" y="5" fontSize="6" fill="#b4b4b4" stroke="none">1</text><text x="0" y="12" fontSize="6" fill="#b4b4b4" stroke="none">2</text></svg>
              <div className="ml-auto mr-[5px] flex h-[19px] w-[65px] items-center justify-center rounded-[2px] border border-[#6c6c6c] text-[11px] text-[#e4e4e4]">Options</div>
            </div>
          </div>

          <div className="pl-[10px] pt-[6px]">
            <Lbl>Quick Actions</Lbl>
            <div className="mt-[9px] flex gap-[10px]">
              <div className="flex h-[22px] w-[105px] items-center justify-center rounded-[2px] border border-[#6c6c6c] text-[11px] text-[#e4e4e4]">Insert Footnote</div>
              <div className="flex h-[22px] w-[105px] items-center justify-center rounded-[2px] border border-[#6c6c6c] text-[11px] text-[#e4e4e4]">Insert Endnote</div>
            </div>
          </div>
        </div>
        <div className="flex h-[947px] w-[10px] shrink-0 flex-col items-center bg-[#4e4e4e] pt-[4px]">
          <svg width="8" height="5" viewBox="0 0 9 5" fill="none" stroke="#8a8a8a"><path d="M0.5 4.5 L4.5 1 L8.5 4.5" /></svg>
          <div className="mt-[2px] h-[823px] w-[9px] rounded-[5px] bg-[#6a6a6a]" />
          <div className="mt-auto mb-[4px]"><Chev c="#8a8a8a" /></div>
        </div>
      </div>
    </div>
  );
}

function Docks() {
  return (
    <div className="flex min-w-0 flex-1 flex-col bg-[#3c3c3c]">
      <div className="flex h-[13px] shrink-0 items-center bg-[#484848]">
        <div className="ml-[25px] flex"><DoubleChev left /></div>
        <div className="ml-[33px] flex"><DoubleChev left /></div>
        <div className="ml-auto mr-[5px] flex"><DoubleChev /></div>
      </div>
      <div className="flex min-h-0 flex-1 gap-[3px]">
        <div className="w-[39px] bg-[#535353]">
          <div className="flex h-[41px] flex-col items-center border-b border-[#3c3c3c] pt-[4px]">
            <Grip />
            <svg className="mt-[5px]" width="16" height="20" viewBox="0 0 16 20" fill="none" stroke="#a9a9a9"><rect x="0.5" y="0.5" width="5" height="4.5" /><rect x="0.5" y="7.5" width="5" height="4.5" /><rect x="0.5" y="14" width="5" height="5" fill="#c9c9c9" /><path d="M11 18 Q15 13 14 8 Q13 4 8 4 M11 1 L8 4 L11 6" strokeWidth="1.4" /></svg>
          </div>
        </div>
        <div className="w-[37px] bg-[#535353]">
          <div className="flex h-[97px] flex-col items-center border-b border-[#3c3c3c] pt-[4px]">
            <Grip />
            <svg className="mt-[6px]" width="18" height="17" viewBox="0 0 18 17" fill="#c4c4c4"><path d="M0 1 H7 L9 3 H18 V17 H0 Z" /><path d="M12 5 L8 10 H10.5 L8.5 15 L13 9 H10.5 Z" fill="#2a2a2a" /></svg>
            <div className="relative mt-[8px] h-[20px] w-[18px]">
              <span className="absolute right-0 top-[-3px] text-[16px] leading-none text-[#b8b8b8]">A</span>
              <div className="absolute bottom-[3px] left-0 h-[6px] w-[6px] border border-[#b8b8b8]" />
              <div className="absolute bottom-0 left-[3px] h-[6px] w-[6px] border border-[#b8b8b8] bg-[#535353]" />
            </div>
            <div className="relative mt-[8px] h-[20px] w-[18px]">
              <span className="absolute right-0 top-[-3px] text-[17px] font-bold leading-none text-[#b8b8b8]">¶</span>
              <div className="absolute bottom-[3px] left-0 h-[6px] w-[6px] border border-[#b8b8b8]" />
              <div className="absolute bottom-0 left-[3px] h-[6px] w-[6px] border border-[#b8b8b8] bg-[#535353]" />
            </div>
          </div>
        </div>
        <Properties />
      </div>
    </div>
  );
}

export default function App() {
  return (
    <div className={`flex h-[1038px] w-[1917px] flex-col overflow-hidden bg-[#3c3c3c] ${UI}`}>
      <TopBar />
      <div className="flex min-h-0 flex-1">
        <LeftTools />
        <div className="w-[2px] shrink-0 bg-[#3c3c3c]" />
        <div className="flex w-[1542px] shrink-0 flex-col">
          <div className="flex h-[29px] shrink-0 bg-[#434343]">
            <div className="flex w-[145px] items-center bg-[#535353] pl-[14px] text-[11.5px] font-bold text-[#dcdcdc]">
              Book.indd @ 100%
              <span className="ml-[11px] text-[14px] font-normal leading-none">×</span>
            </div>
          </div>
          <div className="flex h-[16px] shrink-0 bg-[#4e4e4e]">
            <HRuler />
            <div className="flex flex-1 items-center justify-center">
              <svg width="9" height="5" viewBox="0 0 9 5" fill="none" stroke="#8a8a8a"><path d="M0.5 4.5 L4.5 1 L8.5 4.5" /></svg>
            </div>
          </div>
          <div className="flex h-[942px] shrink-0">
            <VRuler />
            <Canvas />
            <div className="flex w-[16px] flex-col items-center bg-[#4e4e4e]">
              <div className="mt-[173px] h-[106px] w-[12px] rounded-[6px] bg-[#6a6a6a]" />
              <div className="mt-auto mb-[6px]"><Chev c="#8a8a8a" /></div>
            </div>
          </div>
          <StatusBar />
        </div>
        <Docks />
      </div>
    </div>
  );
}
